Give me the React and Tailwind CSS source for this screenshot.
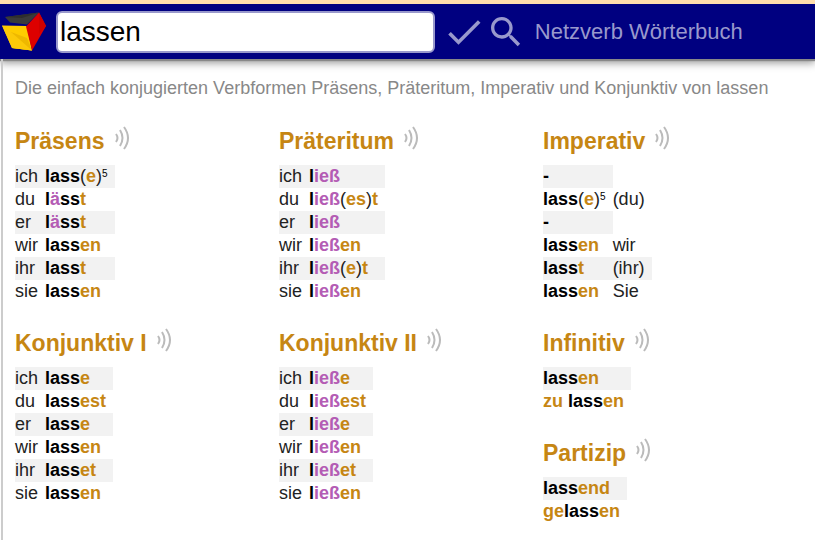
import React from 'react';
import { clsx } from 'clsx';

// Verb forms are written as [kind, text] parts:
// s = stem, v = vowel change, e = ending, p = plain, n = note number
const s = (text) => ['s', text];
const v = (text) => ['v', text];
const e = (text) => ['e', text];
const p = (text) => ['p', text];
const n = (text) => ['n', text];

const partStyles = {
    s: 'font-bold text-black',
    v: 'font-bold text-[#b45cb4]',
    e: 'font-bold text-[#c68613]',
    p: 'font-normal text-[#222222]'
};

const praesens = [
    ['ich', [s('lass'), p('('), e('e'), p(')'), n('5')]],
    ['du', [s('l'), v('ä'), s('ss'), e('t')]],
    ['er', [s('l'), v('ä'), s('ss'), e('t')]],
    ['wir', [s('lass'), e('en')]],
    ['ihr', [s('lass'), e('t')]],
    ['sie', [s('lass'), e('en')]]
];

const praeteritum = [
    ['ich', [s('l'), v('ieß')]],
    ['du', [s('l'), v('ieß'), p('('), e('es'), p(')'), e('t')]],
    ['er', [s('l'), v('ieß')]],
    ['wir', [s('l'), v('ieß'), e('en')]],
    ['ihr', [s('l'), v('ieß'), p('('), e('e'), p(')'), e('t')]],
    ['sie', [s('l'), v('ieß'), e('en')]]
];

const imperativ = [
    [[s('-')]],
    [[s('lass'), p('('), e('e'), p(')'), n('5')], '(du)'],
    [[s('-')]],
    [[s('lass'), e('en')], 'wir'],
    [[s('lass'), e('t')], '(ihr)'],
    [[s('lass'), e('en')], 'Sie']
];

const konjunktiv1 = [
    ['ich', [s('lass'), e('e')]],
    ['du', [s('lass'), e('est')]],
    ['er', [s('lass'), e('e')]],
    ['wir', [s('lass'), e('en')]],
    ['ihr', [s('lass'), e('et')]],
    ['sie', [s('lass'), e('en')]]
];

const konjunktiv2 = [
    ['ich', [s('l'), v('ieß'), e('e')]],
    ['du', [s('l'), v('ieß'), e('est')]],
    ['er', [s('l'), v('ieß'), e('e')]],
    ['wir', [s('l'), v('ieß'), e('en')]],
    ['ihr', [s('l'), v('ieß'), e('et')]],
    ['sie', [s('l'), v('ieß'), e('en')]]
];

const infinitiv = [
    [[s('lass'), e('en')]],
    [[e('zu '), s('lass'), e('en')]]
];

const partizip = [
    [[s('lass'), e('end')]],
    [[e('ge'), s('lass'), e('en')]]
];

const Logo = () => (
    <svg width="46" height="40" viewBox="0 0 46 40" aria-hidden="true">
        <path d="M3 5 37 0.5 25 12.5 8 10.5Z" fill="#3a3a3a" />
        <path d="M3 5 37 0.5 20 6Z" fill="#2e2e2e" />
        <path d="M0 13.5 25 14 30 38.5 10 36Z" fill="#ffcc00" />
        <path d="M9 20 25 26 30 38.5 10 36Z" fill="#eeb800" />
        <path d="M0 13.5 9 20 30 38.5 10 36Z" fill="#fcc908" />
        <path d="M37 0.5 44 14 30 38.5 24 14.5Z" fill="#dd0000" />
        <path d="M37 0.5 44 14 37 22Z" fill="#d00000" />
    </svg>
);

const SoundIcon = () => (
    <svg width="16" height="24" viewBox="0 0 16 24" fill="none" stroke="#bbbbbb" strokeWidth="2" aria-hidden="true">
        <path d="M1 8Q4 12 1 16" />
        <path d="M5 4Q10 12 5 20" />
        <path d="M9 1Q17 12 9 23" />
    </svg>
);

const Form = ({ parts }) => parts.map(([kind, text], idx) => (
    kind === 'n'
        ? <sup key={idx} className="text-[10px] font-normal text-black">{text}</sup>
        : <span key={idx} className={partStyles[kind]}>{text}</span>
));

const VerbTable = ({ title, rows }) => (
    <section>
        <div className="flex items-center mb-2 h-8 gap-[10px]">
            <h2 className="text-[23px] leading-8 font-bold text-[#c68613]">{title}</h2>
            <button type="button" aria-label={`${title} anhören`} className="pb-[6px]">
                <SoundIcon />
            </button>
        </div>
        <table aria-label={title} className="border-collapse text-lg leading-[23px]">
            <tbody>
                {rows.map((row, idx) => (
                    <tr key={idx}>
                        {row.map((cell, col) => (
                            <td
                                key={col}
                                className={clsx(
                                    'p-0 pr-[7px] whitespace-pre text-[#222222]',
                                    idx % 2 === 0 && 'bg-[#f2f2f2]'
                                )}
                            >
                                {Array.isArray(cell) ? <Form parts={cell} /> : cell}
                            </td>
                        ))}
                    </tr>
                ))}
            </tbody>
        </table>
    </section>
);

const Header = () => (
    <header className="border-t-4 border-[#ffdead] bg-[#000080] shadow-[0_2px_1px_#888888,0_4px_8px_#999999]">
        <form className="flex items-center h-[55px] pl-[2px]" onSubmit={(event) => event.preventDefault()}>
            <a href="#start" aria-label="Startseite" className="shrink-0 mr-2">
                <Logo />
            </a>
            <input
                type="text"
                aria-label="Verb suchen"
                defaultValue="lassen"
                className="w-[46.6%] min-w-0 h-[42px] px-[2px] rounded-md border-2 border-[#9999cc] bg-white text-[28px] text-black outline-none"
            />
            <button type="submit" aria-label="Konjugieren" className="shrink-0 ml-[7px]">
                <svg width="44" height="44" viewBox="0 0 24 24" fill="#9999cc" aria-hidden="true">
                    <path d="M9 16.17 4.83 12l-1.42 1.41L9 19 21 7l-1.41-1.41z" />
                </svg>
            </button>
            <button type="button" aria-label="Suchen" className="shrink-0">
                <svg width="40" height="40" viewBox="0 0 24 24" fill="#9999cc" aria-hidden="true">
                    <path d="M15.5 14h-.79l-.28-.27C15.41 12.59 16 11.11 16 9.5 16 5.91 13.09 3 9.5 3S3 5.91 3 9.5 5.91 16 9.5 16c1.61 0 3.09-.59 4.23-1.57l.27.28v.79l5 4.99L20.49 19l-4.99-5zm-6 0C7.01 14 5 11.99 5 9.5S7.01 5 9.5 5 14 7.01 14 9.5 11.99 14 9.5 14z" />
                </svg>
            </button>
            <a href="#woerterbuch" className="ml-[9px] text-[22px] text-[#9999cc] whitespace-nowrap">Netzverb Wörterbuch</a>
        </form>
    </header>
);

const App = () => {
    return (
        <div className="flex flex-col min-h-screen bg-white font-['Liberation_Sans',Arial,sans-serif]">
            <Header />
            <main className="grow ml-px border-l-2 border-[#cccccc] pl-3 pr-2 pt-4">
                <p className="mb-6 text-lg leading-[26px] text-[#888888]">
                    Die einfach konjugierten Verbformen Präsens, Präteritum, Imperativ und Konjunktiv von lassen
                </p>
                <div className="grid grid-cols-3 gap-y-6">
                    <VerbTable title="Präsens" rows={praesens} />
                    <VerbTable title="Präteritum" rows={praeteritum} />
                    <VerbTable title="Imperativ" rows={imperativ} />
                    <VerbTable title="Konjunktiv I" rows={konjunktiv1} />
                    <VerbTable title="Konjunktiv II" rows={konjunktiv2} />
                    <div className="flex flex-col gap-6">
                        <VerbTable title="Infinitiv" rows={infinitiv} />
                        <VerbTable title="Partizip" rows={partizip} />
                    </div>
                </div>
            </main>
        </div>
    );
};

export default App;
